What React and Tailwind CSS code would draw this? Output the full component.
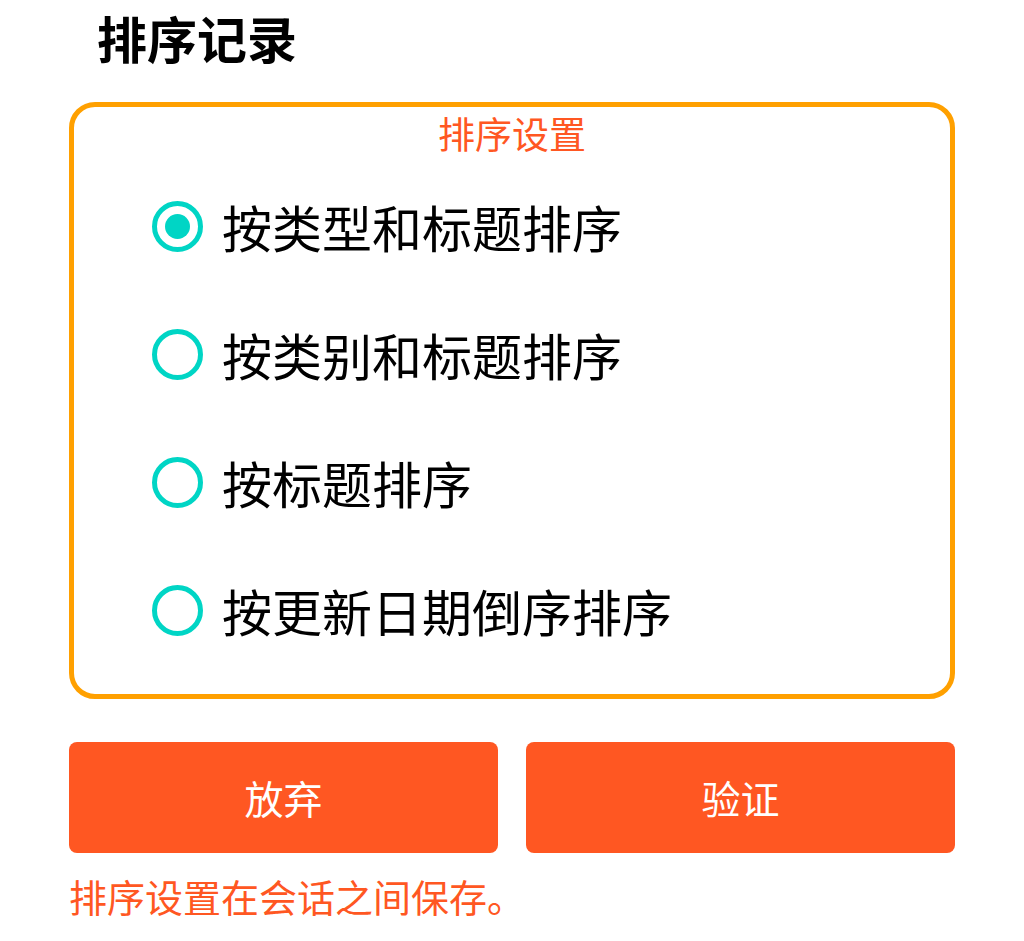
import React, { useState } from "react";

const options = [
  "按类型和标题排序",
  "按类别和标题排序",
  "按标题排序",
  "按更新日期倒序排序",
];

const Radio = ({ checked }) => (
  <span className="flex h-[51px] w-[51px] shrink-0 items-center justify-center rounded-full border-[5px] border-[#00D5C5]">
    {checked && <span className="h-[25px] w-[25px] rounded-full bg-[#00D5C5]" />}
  </span>
);

export default function App() {
  const [selected, setSelected] = useState(0);

  return (
    <div
      className="h-[941px] w-[1024px] bg-white px-[69px]"
      style={{ fontFamily: '"Noto Sans CJK SC", "Noto Sans", sans-serif' }}
    >
      {/* Page title */}
      <h1 className="flex h-[102px] items-center pb-[28px] pl-[28px] text-[50px] font-bold leading-none text-black">
        排序记录
      </h1>

      {/* Sort settings box */}
      <div className="h-[597px] rounded-[26px] border-[5px] border-[#FFA000]">
        <div className="flex h-[45px] items-end justify-center text-[37px] leading-none text-[#FF5722]">
          排序设置
        </div>
        <div className="flex flex-col pl-[78px] pt-[10px]">
          {options.map((label, i) => (
            <button
              key={label}
              onClick={() => setSelected(i)}
              className="flex h-[128px] items-center gap-[19px] text-left"
            >
              <Radio checked={selected === i} />
              <span className="text-[50px] leading-none text-black">{label}</span>
            </button>
          ))}
        </div>
      </div>

      {/* Actions */}
      <div className="mt-[43px] grid grid-cols-2 gap-[28px]">
        <button className="flex h-[111px] items-center justify-center rounded-[8px] bg-[#FF5722] text-[39px] text-white">
          放弃
        </button>
        <button className="flex h-[111px] items-center justify-center rounded-[8px] bg-[#FF5722] text-[39px] text-white">
          验证
        </button>
      </div>

      <p className="mt-[24px] text-[38px] leading-none text-[#FF5722]">
        排序设置在会话之间保存。
      </p>
    </div>
  );
}
